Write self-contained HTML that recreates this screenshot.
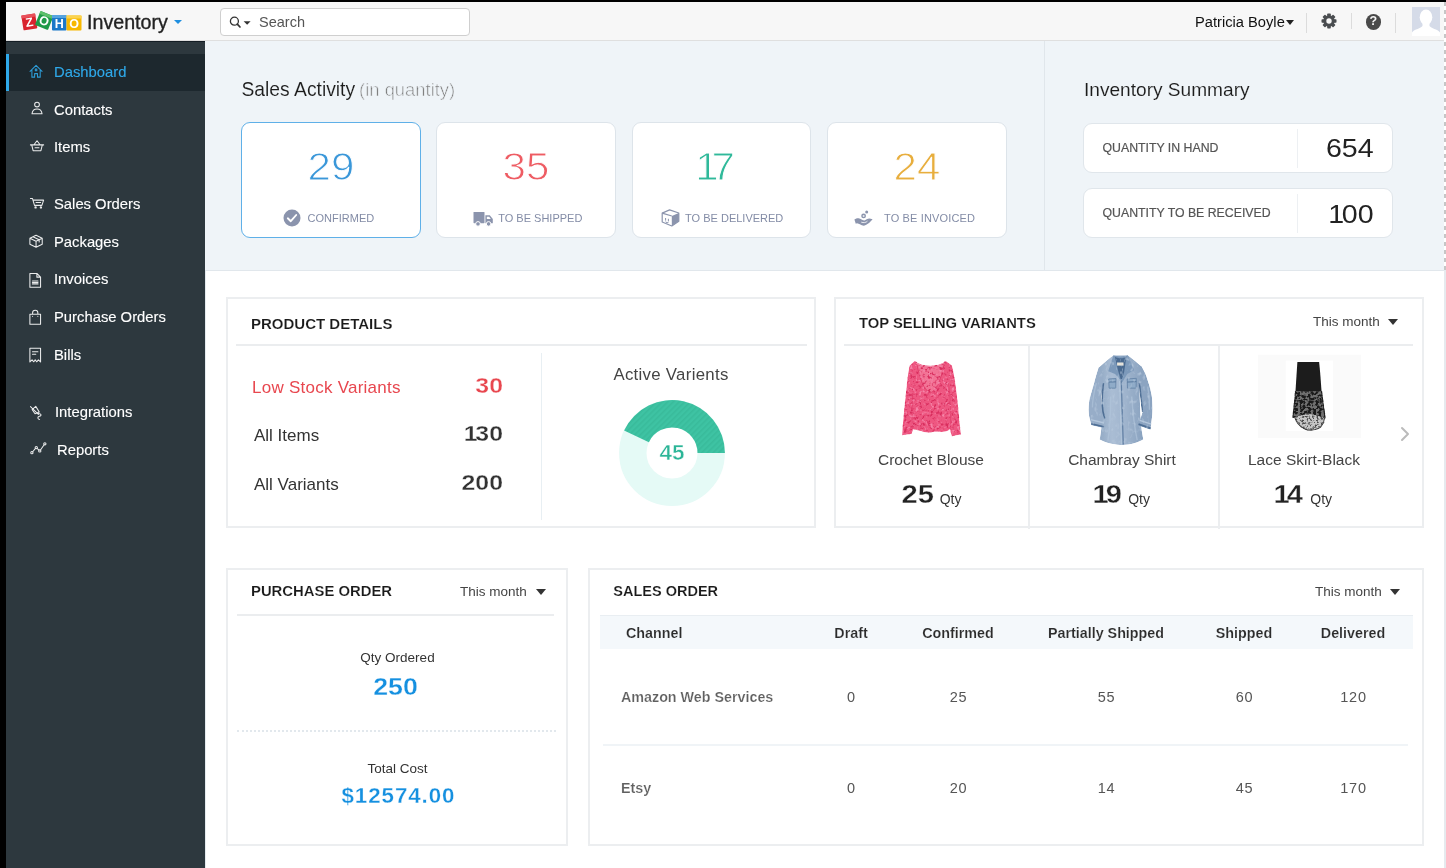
<!DOCTYPE html>
<html lang="en">
<head>
<meta charset="utf-8">
<title>Zoho Inventory - Dashboard</title>
<style>
*{box-sizing:border-box;margin:0;padding:0}
html,body{width:1446px;height:868px;overflow:hidden;background:#000}
body{position:relative;font-family:"Liberation Sans",sans-serif;color:#222;-webkit-font-smoothing:antialiased}
.abs,.t{position:absolute}
.t{white-space:nowrap;line-height:1}
#app{will-change:transform;position:absolute;left:6px;top:2px;width:1440px;height:866px;background:#fff;overflow:hidden}
/* header */
#hdr{position:absolute;left:0;top:0;width:1440px;height:39px;background:#f7f7f7;border-bottom:1px solid #dfdfdf}
#search{position:absolute;left:214px;top:5.5px;width:250px;height:28px;border:1px solid #cfcfcf;border-radius:4px;background:#fff}
.vsep{position:absolute;top:10.5px;width:1px;height:20px;background:#dcdcdc}
/* sidebar */
#side{position:absolute;left:0;top:39px;width:199px;height:827px;background:#2d383e}
.nav{position:absolute;left:0;width:199px;height:37px;color:#fff;font-size:14.8px;-webkit-text-stroke:.12px currentColor}
.nav.on{background:#1d282e;color:#2fa9ea}
.nav.on:before{content:"";position:absolute;left:0;top:0;width:3px;height:37px;background:#2fa9ea}
.nav svg{-webkit-text-stroke:0;position:absolute;left:20.6px;top:7.8px;width:21px;height:21px;fill:none;stroke:currentColor;stroke-width:1.2;opacity:.9;stroke-linecap:round;stroke-linejoin:round}
.nav span{position:absolute;left:48px;top:11.3px;line-height:1;white-space:nowrap}
/* main */
#top{position:absolute;left:199px;top:39px;width:1239px;height:229.5px;background:#eff4f8;border-bottom:1px solid #e1e7ec}
.sa{position:absolute;top:81.3px;width:180.5px;height:115.5px;background:#fff;border:1px solid #dde4ea;border-radius:9px}
.sa.sel{border:1.5px solid #5fb0e8}
.sa .n{position:absolute;left:0;width:178px;top:24.6px;text-align:center;font-size:38.6px;line-height:1;-webkit-text-stroke:.95px #fff;transform:scaleX(1.09)}
.sa .l{position:absolute;top:89.5px;font-size:11px;line-height:1;color:#838ca6;white-space:nowrap}
.inv{position:absolute;left:878px;width:310px;height:50px;background:#fff;border:1px solid #e0e6eb;border-radius:9px}
.inv .k{position:absolute;left:18.5px;top:18.4px;font-size:12.3px;line-height:1;color:#555;-webkit-text-stroke:.2px #555;white-space:nowrap}
.inv .v{position:absolute;right:18px;top:12.5px;font-size:25.5px;line-height:1;color:#222;transform:scaleX(1.12);transform-origin:100% 50%}
.inv i{position:absolute;left:213px;top:5px;width:1px;height:39px;background:#edf0f3}
.card{position:absolute;background:#fff;border:2px solid #eceef0}
.ch{position:absolute;font-size:15px;font-weight:bold;color:#1a1a1a;-webkit-text-stroke:.15px #fff;line-height:1;white-space:nowrap}
.hr{position:absolute;height:2px;background:#ebedef}
.tm{position:absolute;font-size:13.5px;color:#444;line-height:1;white-space:nowrap}
.car{position:absolute;width:0;height:0;border-left:5px solid transparent;border-right:5px solid transparent;border-top:6px solid #333}
.th{font-size:14.3px;font-weight:bold;color:#2c2c2c;-webkit-text-stroke:.15px #f4f8fb}
.tn{font-size:14.3px;font-weight:bold;color:#606060;-webkit-text-stroke:.2px #fff}
.td{font-size:14.5px;letter-spacing:.9px;padding-left:1.2px;color:#555}
.pn{width:100px;text-align:right;font-size:22px;font-weight:bold;-webkit-text-stroke:.3px #fff;transform:scaleX(1.13);transform-origin:100% 50%}
.qn{width:100px;text-align:right;font-size:26px;font-weight:bold;color:#222;-webkit-text-stroke:.35px #fff;transform:scaleX(1.12);transform-origin:100% 50%}
.qq{font-size:14px;color:#333}
</style>
</head>
<body>
<div id="app">

<!-- ============ HEADER ============ -->
<div id="hdr">
  <svg class="abs" style="left:15px;top:8px" width="62" height="24" viewBox="0 0 62 24">
    <g font-family="Liberation Sans, sans-serif" font-weight="bold" font-size="12.5" fill="#fff" text-anchor="middle">
      <g transform="rotate(-9 8 13)"><rect x="1.5" y="4.5" width="14" height="15" rx="1" fill="#d9232e"/><rect x="1.5" y="4.5" width="14" height="3" fill="#e8505a"/><text x="8.5" y="16.5">Z</text></g>
      <g transform="rotate(22 23 11)"><rect x="16" y="3" width="14" height="15" rx="1" fill="#1f9a48"/><rect x="16" y="3" width="14" height="3" fill="#5cbf6a"/><text x="23" y="15">O</text></g>
      <g><rect x="31" y="5" width="14.5" height="15.5" rx="1" fill="#1b78c8"/><rect x="31" y="5" width="14.5" height="3" fill="#56a4e0"/><text x="38.2" y="17.5">H</text></g>
      <g><rect x="45.5" y="5.5" width="15" height="15" rx="1" fill="#f7b800"/><rect x="45.5" y="5.5" width="15" height="3" fill="#fbd34f"/><text x="53" y="17.5">O</text></g>
    </g>
  </svg>
  <div class="t" style="left:81px;top:9.5px;font-size:20.6px;color:#222;transform:scaleX(.955);transform-origin:0 0;-webkit-text-stroke:.35px #222">Inventory</div>
  <div class="car" style="left:168px;top:18px;border-left-width:4px;border-right-width:4px;border-top:4px solid #1f8fe0"></div>
  <div id="search">
    <svg class="abs" style="left:7px;top:6px" width="24" height="15" viewBox="0 0 24 15"><circle cx="6.4" cy="6.2" r="4" fill="none" stroke="#333" stroke-width="1.3"/><path d="M9.3 9.2 L12 12" stroke="#333" stroke-width="1.7" stroke-linecap="round"/><path d="M15.6 6.2 h7 l-3.5 3.6z" fill="#333"/></svg>
    <div class="t" style="left:38px;top:6px;font-size:14.5px;color:#555">Search</div>
  </div>
  <div class="t" style="left:1189px;top:13px;font-size:14.7px;color:#111">Patricia Boyle</div>
  <div class="car" style="left:1279.5px;top:18px;border-left-width:4.5px;border-right-width:4.5px;border-top:5px solid #222"></div>
  <div class="vsep" style="left:1300px"></div>
  <div class="vsep" style="left:1345px;height:16px"></div>
  <div class="vsep" style="left:1389px"></div>
  <svg class="abs" style="left:1315px;top:10.6px" width="16" height="16" viewBox="0 0 16 16"><g fill="#4a4d50"><circle cx="8" cy="8" r="5.7"/><g id="gt"><rect x="6.2" y="0.5" width="3.6" height="3.2" rx=".7"/><rect x="6.2" y="12.3" width="3.6" height="3.2" rx=".7"/></g><use href="#gt" transform="rotate(45 8 8)"/><use href="#gt" transform="rotate(90 8 8)"/><use href="#gt" transform="rotate(135 8 8)"/></g><circle cx="8" cy="8" r="2.7" fill="#f7f7f7"/></svg>
  <div class="abs" style="left:1359.5px;top:12px;width:15.5px;height:15.5px;border-radius:50%;background:#4a4a4a;color:#f7f7f7;font-weight:bold;font-size:12.5px;line-height:15.5px;text-align:center">?</div>
  <svg class="abs" style="left:1406px;top:5px" width="28" height="29" viewBox="0 0 28 29"><rect width="28" height="26.5" fill="#d5dbe8"/><ellipse cx="14" cy="10.2" rx="6.3" ry="7.8" fill="#fff"/><path d="M10.5 15 H17.5 V19 C19 21.5 25.5 22 28 25.5 V29 H0 V25.5 C2.5 22 9 21.5 10.5 19Z" fill="#fff"/></svg>
</div>

<!-- ============ SIDEBAR ============ -->
<div id="side">
  <div class="abs" style="left:0;top:0;width:199px;height:1px;background:#141d24"></div>
  <div class="nav on" style="top:13px"><svg viewBox="0 0 24 24"><path d="M3.5 10.8 L10.35 3.9 L17.2 10.8 M5.6 9.2 V17.3 H8.7 V13.3 H12 V17.3 H15.1 V9.2"/><rect x="9.5" y="8" width="1.7" height="1.9"/></svg><span>Dashboard</span></div>
  <div class="nav" style="top:50.5px"><svg viewBox="0 0 24 24"><circle cx="11.45" cy="6.3" r="2.7"/><path d="M5.7 16.8 C6.2 12.6 8.8 11.4 11.45 11.4 C14.1 11.4 16.7 12.6 17.2 16.8 Z"/></svg><span>Contacts</span></div>
  <div class="nav" style="top:88px"><svg viewBox="0 0 24 24"><path d="M3.9 9 H19 M5.4 9 L7 15.7 H15.9 L17.5 9 M8 8.8 L11.45 4.3 L14.9 8.8 M9.2 12.3 H13.7"/></svg><span>Items</span></div>
  <div class="nav" style="top:145px"><svg viewBox="0 0 24 24"><path d="M3.9 5.2 H6.3 L8.6 13 H17 L19 7 H6.9 M10.3 9.8 H15.6"/><circle cx="9.8" cy="15.3" r=".75"/><circle cx="15.9" cy="15.3" r=".75"/></svg><span>Sales Orders</span></div>
  <div class="nav" style="top:182.5px"><svg viewBox="0 0 24 24"><path d="M10.35 4.9 L17.4 8.3 V15.2 L10.35 18.6 L3.3 15.2 V8.3 Z M3.3 8.3 L10.35 11.7 L17.4 8.3 M10.35 11.7 V18.6 M6.8 6.6 L13.9 10 V12.6"/></svg><span>Packages</span></div>
  <div class="nav" style="top:220px"><svg viewBox="0 0 24 24"><path d="M3.3 5.1 H11.3 L15.5 9.3 V20.9 H3.3 Z M11.3 5.1 V9.3 H15.5 M6.2 13.8 H12.6 M6.2 15.4 H12.6 M6.2 17 H12.6"/></svg><span>Invoices</span></div>
  <div class="nav" style="top:258px"><svg viewBox="0 0 24 24"><path d="M3.3 8.2 H15.5 V19.6 H3.3 Z M6.4 8.2 V6.7 A3 3 0 0 1 12.4 6.7 V8.2 M6.4 10.5 V10.7 M12.4 10.5 V10.7"/></svg><span>Purchase Orders</span></div>
  <div class="nav" style="top:296px"><svg viewBox="0 0 24 24"><path d="M3.3 3.6 H15.5 V19.4 L13 16.9 L11 19.2 L9.4 16.9 L7.8 19.2 L5.8 16.9 L3.3 19.4 Z M6.3 7.6 H12.5 M6.3 10.6 H10"/></svg><span>Bills</span></div>
  <div class="nav" style="top:353px"><svg viewBox="0 0 24 24"><path d="M4 5.2 L13 14.2 M5.8 8.6 L10 5 L14 11.4 L9.2 13.4 Z M12.6 13.2 C16.6 13 17 15.8 14.2 16.4 C11.6 17 12 19.8 14.4 20"/></svg><span style="left:49px">Integrations</span></div>
  <div class="nav" style="top:390.5px"><svg viewBox="0 0 24 24"><path d="M6.5 14.6 L9.7 10.8 M11.5 10.7 L13.7 12.7 M15.4 12.5 L19.6 6.6"/><circle cx="5.6" cy="15.6" r="1.3"/><circle cx="10.6" cy="9.8" r="1.3"/><circle cx="14.6" cy="13.6" r="1.3"/><circle cx="20.4" cy="5.5" r="1.3"/></svg><span style="left:51px">Reports</span></div>
</div>
<div class="abs" style="left:199px;top:39px;width:1px;height:827px;background:#e4eaee"></div>

<!-- ============ TOP (sales activity / inventory summary) ============ -->
<div id="top">
  <div class="t" style="left:36.5px;top:39.3px;font-size:19.3px;color:#1c1c1c;-webkit-text-stroke:.1px #eff4f8">Sales Activity<span style="color:#7d7d7d;font-size:18.4px;-webkit-text-stroke:.6px #eff4f8;margin-left:4px">(in quantity)</span></div>

  <div class="sa sel" style="left:35.6px;width:180.2px"><div class="n" style="color:#3a97d9;-webkit-text-stroke-color:#fff">29</div>
    <svg class="abs" style="left:41.5px;top:86px" width="18" height="18" viewBox="0 0 18 18"><circle cx="9" cy="9" r="8.5" fill="#8b94ad"/><path d="M4.8 9.3 L7.8 12.2 L13.2 6" fill="none" stroke="#fff" stroke-width="1.9" stroke-linecap="round" stroke-linejoin="round"/></svg>
    <div class="l" style="left:66px">CONFIRMED</div></div>
  <div class="sa" style="left:231.2px;width:179.8px"><div class="n" style="color:#ee5c63">35</div>
    <svg class="abs" style="left:35.6px;top:87.7px" width="21" height="16" viewBox="0 0 21 16"><g fill="#8b94ad"><rect x="0.5" y="1" width="11" height="11.2" rx=".6"/><path d="M12.4 4.3 H16.8 L19.8 8 V12.2 H12.4Z"/><circle cx="5" cy="12.9" r="2.3" stroke="#fff" stroke-width="1"/><circle cx="15.6" cy="12.9" r="2.3" stroke="#fff" stroke-width="1"/></g><path d="M13.8 5.8 H16.2 L17.8 8 H13.8Z" fill="#fff"/></svg>
    <div class="l" style="left:61px">TO BE SHIPPED</div></div>
  <div class="sa" style="left:426.9px;width:179.3px"><div class="n" style="color:#2fb99a;left:-7px"><span style="letter-spacing:-6.5px">1</span>7</div>
    <svg class="abs" style="left:28px;top:85.7px" width="19" height="18" viewBox="0 0 19 18"><path d="M1.2 4.1 L8.6 .9 L17.8 4 L17.8 12.2 L10.8 17 L1.2 13Z" fill="#fff" stroke="#8b94ad" stroke-width="1.2" stroke-linejoin="round"/><path d="M10.8 7 L17.8 4 L17.8 12.2 L10.8 17Z" fill="#8b94ad"/><path d="M1.2 4.1 L10.8 7" stroke="#8b94ad" stroke-width="1.2"/><path d="M4.6 9 V11.6 M7.4 9.8 V12.4 M4.6 12.8 Q6 14.2 7.4 13.6" fill="none" stroke="#8b94ad" stroke-width="1"/></svg>
    <div class="l" style="left:52.2px">TO BE DELIVERED</div></div>
  <div class="sa" style="left:622.4px;width:179.3px"><div class="n" style="color:#e8ae3d">24</div>
    <svg class="abs" style="left:26px;top:85.7px" width="20" height="19" viewBox="0 0 20 19"><g fill="#8b94ad"><circle cx="12.7" cy="3.1" r="1.5"/><circle cx="9.6" cy="6.9" r="2.4"/><path d="M0.4 10.6 C2 9.4 3.4 9 4.6 9.2 C6.8 9.6 8.4 11.2 10.6 11.6 C11.6 11 13.4 9.6 15.6 9.5 L18.6 10.3 C17.2 12.2 15.4 13.8 13.8 14.8 C12.4 15.8 11 16.7 9.7 16.7 C8.4 16.6 7.4 16 6.4 15.5 C5.2 14.9 4 14.3 3 14.2 L1.8 14.8 Z"/></g><circle cx="9.6" cy="6.9" r="1" fill="#fff" opacity=".8"/><path d="M7.6 13.3 C9.6 13.9 12 13.8 13.2 12.4" fill="none" stroke="#fff" stroke-width=".8" stroke-linecap="round"/></svg>
    <div class="l" style="left:55.6px;letter-spacing:.15px">TO BE INVOICED</div></div>

  <div class="abs" style="left:839px;top:0;width:1px;height:229px;background:#e0e6eb"></div>
  <div class="t" style="left:879px;top:38.5px;font-size:19.1px;color:#1c1c1c;-webkit-text-stroke:.1px #eff4f8">Inventory Summary</div>
  <div class="inv" style="top:81.8px"><div class="k">QUANTITY IN HAND</div><i></i><div class="v">654</div></div>
  <div class="inv" style="top:147px"><div class="k">QUANTITY TO BE RECEIVED</div><i></i><div class="v"><span style="letter-spacing:-2px">1</span>00</div></div>
</div>

<!-- right edge strip -->
<div class="abs" style="left:1438px;top:268px;width:2px;height:598px;background:#e6eaee"></div>
<div class="abs" style="left:1438px;top:0;width:2px;height:268px;background:repeating-linear-gradient(to bottom,#fff 0,#fff .3px,#c6c6c6 .3px,#c6c6c6 3.9px,#fff 3.9px,#fff 8px)"></div>

<!-- ============ PRODUCT DETAILS ============ -->
<div class="card" style="left:220px;top:295px;width:590px;height:231px"></div>
<div class="ch" style="left:245px;top:314.3px">PRODUCT DETAILS</div>
<div class="hr" style="left:230px;top:342px;width:571px"></div>
<div class="abs" style="left:535px;top:351px;width:1px;height:167px;background:#e8eff3"></div>
<div class="t" style="left:246px;top:377px;font-size:17px;letter-spacing:.25px;color:#e8474f">Low Stock Variants</div>
<div class="t pn" style="left:396.5px;top:373.4px;color:#e8474f">30</div>
<div class="t" style="left:248px;top:425px;font-size:17px;color:#333">All Items</div>
<div class="t pn" style="left:396.5px;top:421.4px;color:#333"><span style="letter-spacing:-2px">1</span>30</div>
<div class="t" style="left:248px;top:474px;font-size:17px;color:#333">All Variants</div>
<div class="t pn" style="left:396.5px;top:470.4px;color:#333">200</div>
<div class="t" style="left:565px;top:364.8px;width:200px;text-align:center;font-size:16.8px;letter-spacing:.3px;color:#444">Active Varients</div>
<svg class="abs" style="left:612px;top:397px" width="108" height="108" viewBox="-54 -54 108 108">
  <defs><pattern id="st" width="4" height="4" patternUnits="userSpaceOnUse" patternTransform="rotate(45)"><rect width="4" height="4" fill="#3ec3a3"/><rect width="1.6" height="4" fill="#39bb9b"/></pattern></defs>
  <circle r="39.2" fill="none" stroke="#e5faf6" stroke-width="27.4"/>
  <path d="M52.9 0 A52.9 52.9 0 0 0 -47.91 -22.44 L-23.1 -10.8 A25.5 25.5 0 0 1 25.5 0Z" fill="url(#st)"/>
  <text x="0" y="6.9" text-anchor="middle" font-family="Liberation Sans, sans-serif" font-weight="bold" font-size="22.6" fill="#2bb597" stroke="#fff" stroke-width=".5">45</text>
</svg>

<!-- ============ TOP SELLING VARIANTS ============ -->
<div class="card" style="left:828px;top:295px;width:590px;height:231px"></div>
<div class="ch" style="left:853px;top:313.6px;font-size:14.8px">TOP SELLING VARIANTS</div>
<div class="tm" style="left:1307px;top:313px">This month</div>
<div class="car" style="left:1382px;top:317px"></div>
<div class="hr" style="left:838px;top:342px;width:569px"></div>
<div class="abs" style="left:1022px;top:344px;width:2px;height:183px;background:#eceef0"></div>
<div class="abs" style="left:1212px;top:344px;width:2px;height:183px;background:#eceef0"></div>

<div class="t" style="left:825px;top:449.7px;width:200px;text-align:center;font-size:15.5px;color:#444">Crochet Blouse</div>
<div class="t" style="left:1016px;top:449.7px;width:200px;text-align:center;font-size:15.5px;color:#444">Chambray Shirt</div>
<div class="t" style="left:1198px;top:449.7px;width:200px;text-align:center;font-size:15.5px;color:#444">Lace Skirt-Black</div>
<div class="t qn" style="left:827.6px;top:479px">25</div><div class="t qq" style="left:933.7px;top:489.5px">Qty</div>
<div class="t qn" style="left:1015.7px;top:479px"><span style="letter-spacing:-2.6px">1</span>9</div><div class="t qq" style="left:1122.2px;top:489.5px">Qty</div>
<div class="t qn" style="left:1197.4px;top:479px"><span style="letter-spacing:-2.6px">1</span>4</div><div class="t qq" style="left:1304.3px;top:489.5px">Qty</div>
<svg class="abs" style="left:1394px;top:424px" width="10" height="16" viewBox="0 0 10 16"><path d="M2 2 L8 8 L2 14" fill="none" stroke="#bbb" stroke-width="2" stroke-linecap="round" stroke-linejoin="round"/></svg>

<!-- PRODUCT IMAGES -->
<!--IMG_START-->
<svg class="abs" style="left:889px;top:350px" width="75" height="90" viewBox="0 0 723 868">
  <defs>
    <filter id="lace" x="0" y="0" width="100%" height="100%" color-interpolation-filters="sRGB">
      <feTurbulence type="fractalNoise" baseFrequency="0.035" numOctaves="2" seed="7" result="n"/>
      <feColorMatrix in="n" type="matrix" values="0 0 0 0 0.85  0 0 0 0 0.18  0 0 0 0 0.37  5 0 0 0 -2.6" result="dk"/>
      <feColorMatrix in="n" type="matrix" values="0 0 0 0 0.96  0 0 0 0 0.52  0 0 0 0 0.66  0 4 0 0 -2.2" result="lt"/>
      <feMerge result="m"><feMergeNode in="SourceGraphic"/><feMergeNode in="dk"/><feMergeNode in="lt"/></feMerge>
      <feComposite in="m" in2="SourceGraphic" operator="in" result="c"/>
      <feGaussianBlur in="c" stdDeviation="4"/>
    </filter>
  </defs>
  <g filter="url(#lace)">
    <path d="M190,88 C240,150 440,150 490,88 L550,130 C580,250 600,420 612,560 C622,680 630,750 637,795 L547,812 C540,790 535,765 530,745 C480,790 420,760 355,775 C290,790 220,745 175,748 C170,765 165,780 160,792 L68,802 C75,700 90,520 105,400 C115,290 125,200 140,130 Z" fill="#ee5781"/>
    <path d="M215,118 C240,250 280,370 340,388 C400,378 440,250 470,118 C420,152 270,152 215,118 Z" fill="#f27395"/>
    <path d="M190,90 C240,152 440,152 490,90" fill="none" stroke="#f58dab" stroke-width="14"/>
    <path d="M212,125 C240,260 280,375 340,392 C400,380 445,260 472,125" fill="none" stroke="#e03e6c" stroke-width="9"/>
    <path d="M170,745 C160,600 165,420 185,300 M532,745 C540,600 535,420 515,300" fill="none" stroke="#dd3a68" stroke-width="9" opacity=".6"/>
  </g>
</svg>
<svg class="abs" style="left:1077px;top:348px" width="75" height="96" viewBox="0 0 678 868">
  <defs>
    <filter id="den" x="0" y="0" width="100%" height="100%" color-interpolation-filters="sRGB">
      <feTurbulence type="fractalNoise" baseFrequency="0.03 0.02" numOctaves="2" seed="4" result="n"/>
      <feColorMatrix in="n" type="matrix" values="0 0 0 0 0.71  0 0 0 0 0.78  0 0 0 0 0.86  0 3 0 0 -1.7" result="lt"/>
      <feMerge result="m"><feMergeNode in="SourceGraphic"/><feMergeNode in="lt"/></feMerge>
      <feComposite in="m" in2="SourceGraphic" operator="in" result="c"/>
      <feGaussianBlur in="c" stdDeviation="4.5"/>
    </filter>
    <linearGradient id="dn" x1="0" x2="1"><stop offset="0" stop-color="#90a8c3"/><stop offset=".3" stop-color="#aabdd4"/><stop offset=".6" stop-color="#9fb4cd"/><stop offset="1" stop-color="#89a2bf"/></linearGradient>
  </defs>
  <g filter="url(#den)">
    <path d="M140,160 C120,220 105,280 100,300 C80,370 60,430 55,470 C48,520 50,560 55,600 L75,680 L190,707 L196,620 C180,580 170,500 165,420 L185,300 L230,300 L230,150Z" fill="#97adc8"/>
    <path d="M530,150 C560,200 575,240 580,260 C605,330 622,400 625,440 C630,520 628,580 625,600 L610,722 L500,682 L538,560 C528,470 518,380 510,300 L470,300 L470,140Z" fill="#8ca4c1"/>
    <path d="M275,48 L405,48 L460,90 L530,150 C515,200 508,250 510,300 C512,400 515,500 520,600 C524,660 528,700 530,720 L545,810 C500,835 430,858 360,860 C300,860 210,845 150,810 C158,770 162,740 166,700 C170,620 172,500 175,420 L185,300 C180,240 165,200 140,160 L220,90Z" fill="url(#dn)"/>
    <path d="M275,48 L228,192 L290,216 L340,272 L355,292 L400,216 L462,182 L405,48 C380,62 300,62 275,48Z" fill="#7c99ba"/>
    <path d="M288,60 C320,78 365,78 392,60 L372,200 L352,262 L340,262 L318,190Z" fill="#4a6a90"/>
    <rect x="308" y="113" width="58" height="28" fill="#ebe6da"/>
    <path d="M346,275 C350,400 356,600 364,855" fill="none" stroke="#607fa3" stroke-width="11"/>
    <path d="M330,280 C334,400 340,600 348,855" fill="none" stroke="#b4c7dc" stroke-width="8"/>
    <path d="M232,262 L298,258 L296,345 L236,345Z M400,262 L482,256 L480,345 L402,345Z" fill="#8fabc8" stroke="#6685a8" stroke-width="8"/>
    <path d="M232,290 L298,288 M400,290 L482,286" fill="none" stroke="#57779c" stroke-width="9"/>
    <path d="M185,300 C168,420 168,540 196,620 M510,300 C520,400 530,480 538,560" fill="none" stroke="#4f6f95" stroke-width="14"/>
    <path d="M75,668 L190,694 M612,708 L502,670" fill="none" stroke="#4f6f95" stroke-width="16"/>
    <path d="M70,630 L190,660 M618,670 L512,636" fill="none" stroke="#b4c7dc" stroke-width="12"/>
    <path d="M250,420 C250,560 245,700 225,820 M440,420 C450,560 465,700 490,815" fill="none" stroke="#b3c6dc" stroke-width="13" opacity=".6"/>
    <path d="M120,300 C100,380 85,450 85,520 M585,330 C600,400 605,470 600,540" fill="none" stroke="#b3c6dc" stroke-width="12" opacity=".6"/>
  </g>
</svg>
<svg class="abs" style="left:1249px;top:348px" width="110" height="92" viewBox="0 0 1038 868">
  <defs>
    <filter id="blk" x="0" y="0" width="100%" height="100%" color-interpolation-filters="sRGB">
      <feTurbulence type="fractalNoise" baseFrequency="0.04" numOctaves="2" seed="11" result="n"/>
      <feColorMatrix in="n" type="matrix" values="0 0 0 0 0.1  0 0 0 0 0.1  0 0 0 0 0.1  6 0 0 0 -2.5" result="dk"/>
      <feMerge result="m"><feMergeNode in="SourceGraphic"/><feMergeNode in="dk"/></feMerge>
      <feComposite in="m" in2="SourceGraphic" operator="in" result="c"/>
      <feGaussianBlur in="c" stdDeviation="4"/>
    </filter>
    <filter id="blk2" x="0" y="0" width="100%" height="100%" color-interpolation-filters="sRGB">
      <feTurbulence type="fractalNoise" baseFrequency="0.05" numOctaves="2" seed="5" result="n"/>
      <feColorMatrix in="n" type="matrix" values="0 0 0 0 0.3  0 0 0 0 0.3  0 0 0 0 0.3  0 5 0 0 -2.4" result="dk"/>
      <feMerge result="m"><feMergeNode in="SourceGraphic"/><feMergeNode in="dk"/></feMerge>
      <feComposite in="m" in2="SourceGraphic" operator="in" result="c"/>
      <feGaussianBlur in="c" stdDeviation="4"/>
    </filter>
    <filter id="bl3"><feGaussianBlur stdDeviation="4"/></filter>
  </defs>
  <rect x="28" y="45" width="972" height="785" fill="#fafafa"/>
  <rect x="290" y="100" width="445" height="665" fill="#fff"/>
  <g filter="url(#blk2)">
    <path d="M372,632 C383,660 392,675 399,687 C412,702 425,716 438,726 C458,740 478,750 497,756 C520,758 542,756 562,752 C580,747 598,741 614,733 C626,720 638,704 647,687 C650,675 654,655 656,640 C640,625 620,616 601,612 C565,602 530,599 497,599 C465,599 430,605 405,612 C395,616 383,624 372,632 Z" fill="#c6c6c6"/>
    <path d="M372,632 C383,660 392,675 399,687 C412,702 425,716 438,726 C458,740 478,750 497,756 C520,758 542,756 562,752 C580,747 598,741 614,733 C626,720 638,704 647,687 C650,675 654,655 656,640" fill="none" stroke="#3a3a3a" stroke-width="11"/>
  </g>
  <g filter="url(#blk)">
    <path d="M383,388 L627,388 C640,480 652,570 662,648 C640,634 620,626 601,622 C565,612 530,609 497,609 C465,609 430,615 405,622 C390,627 372,634 358,642 C366,560 376,470 383,388 Z" fill="#707070"/>
    <path d="M383,388 C376,470 366,560 358,642 M627,388 C640,480 652,570 662,648" fill="none" stroke="#2c2c2c" stroke-width="12"/>
  </g>
  <path d="M400,112 L605,112 C615,200 622,300 628,391 L382,391 C388,300 394,200 400,112Z" fill="#1c1c1c" filter="url(#bl3)"/>
</svg>
<!--IMG_END-->

<!-- ============ PURCHASE ORDER ============ -->
<div class="card" style="left:220px;top:566px;width:342.3px;height:278px"></div>
<div class="ch" style="left:245px;top:581.8px;font-size:14.85px">PURCHASE ORDER</div>
<div class="tm" style="left:454px;top:583px">This month</div>
<div class="car" style="left:530px;top:587px"></div>
<div class="hr" style="left:231px;top:612px;width:317px"></div>
<div class="t" style="left:220px;top:649px;width:343px;text-align:center;font-size:13.5px;color:#333">Qty Ordered</div>
<div class="t" style="left:218px;top:673.7px;width:343px;text-align:center;font-size:23.5px;font-weight:bold;color:#1590e0;-webkit-text-stroke:.3px #fff;transform:scaleX(1.14)">250</div>
<div class="abs" style="left:231px;top:728px;width:319px;height:0;border-top:2px dotted #e2e8ed"></div>
<div class="t" style="left:220px;top:760px;width:343px;text-align:center;font-size:13.5px;color:#333">Total Cost</div>
<div class="t" style="left:221px;top:783px;width:343px;text-align:center;font-size:22.3px;font-weight:bold;letter-spacing:.95px;color:#1590e0;-webkit-text-stroke:.3px #fff">$12574.00</div>

<!-- ============ SALES ORDER ============ -->
<div class="card" style="left:582px;top:566px;width:836px;height:278px"></div>
<div class="ch" style="left:607.3px;top:582px;font-size:14.5px">SALES ORDER</div>
<div class="tm" style="left:1309px;top:583px">This month</div>
<div class="car" style="left:1384px;top:587px"></div>
<div class="abs" style="left:594px;top:613px;width:813px;height:34px;background:#f4f8fb;border-top:1px solid #e9eef2"></div>
<div class="t th" style="left:620px;top:624px">Channel</div>
<div class="t th" style="left:765px;top:624px;width:160px;text-align:center">Draft</div>
<div class="t th" style="left:872px;top:624px;width:160px;text-align:center">Confirmed</div>
<div class="t th" style="left:1020px;top:624px;width:160px;text-align:center">Partially Shipped</div>
<div class="t th" style="left:1158px;top:624px;width:160px;text-align:center">Shipped</div>
<div class="t th" style="left:1267px;top:624px;width:160px;text-align:center">Delivered</div>
<div class="t tn" style="left:615px;top:688px">Amazon Web Services</div>
<div class="t td" style="left:805px;top:688px;width:80px;text-align:center">0</div>
<div class="t td" style="left:912px;top:688px;width:80px;text-align:center">25</div>
<div class="t td" style="left:1060px;top:688px;width:80px;text-align:center">55</div>
<div class="t td" style="left:1198px;top:688px;width:80px;text-align:center">60</div>
<div class="t td" style="left:1307px;top:688px;width:80px;text-align:center">120</div>
<div class="t tn" style="left:615px;top:779px">Etsy</div>
<div class="t td" style="left:805px;top:779px;width:80px;text-align:center">0</div>
<div class="t td" style="left:912px;top:779px;width:80px;text-align:center">20</div>
<div class="t td" style="left:1060px;top:779px;width:80px;text-align:center">14</div>
<div class="t td" style="left:1198px;top:779px;width:80px;text-align:center">45</div>
<div class="t td" style="left:1307px;top:779px;width:80px;text-align:center">170</div>
<div class="abs" style="left:597px;top:742px;width:805px;height:2px;background:#f0f4f7"></div>

</div>
</body>
</html>
